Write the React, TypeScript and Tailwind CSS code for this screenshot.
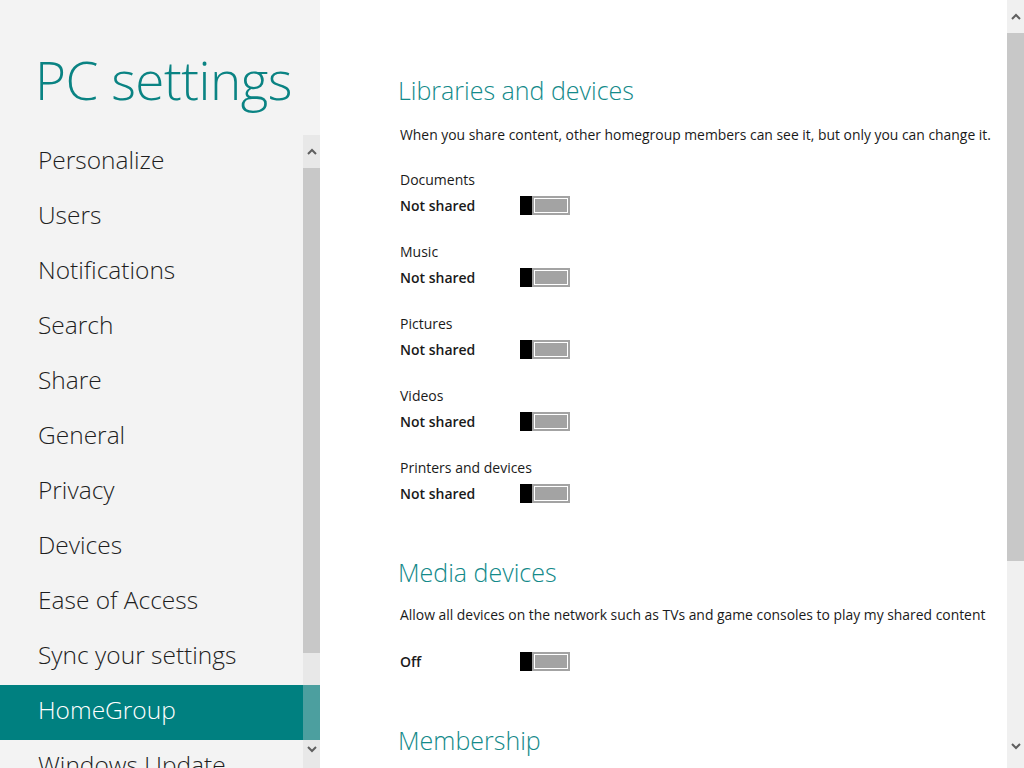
import React from 'react'

const menu = [
  'Personalize',
  'Users',
  'Notifications',
  'Search',
  'Share',
  'General',
  'Privacy',
  'Devices',
  'Ease of Access',
  'Sync your settings',
  'HomeGroup',
  'Windows Update',
]

const libraries = ['Documents', 'Music', 'Pictures', 'Videos', 'Printers and devices']

const font = { fontFamily: '"Open Sans", "Noto Sans", sans-serif' }

const Chevron = ({ up }: { up?: boolean }) => (
  <svg width="10" height="7" viewBox="0 0 10 7" className="block">
    <polyline
      points={up ? '1,6 5,2 9,6' : '1,1 5,5 9,1'}
      fill="none"
      stroke="#5f5f5f"
      strokeWidth="2"
    />
  </svg>
)

const Toggle = () => (
  <div className="flex h-[19px] w-[50px]">
    <div className="w-[12px] bg-black" />
    <div className="flex-1 bg-[#a3a3a3] p-[2px]">
      <div className="h-full w-full bg-white p-[1px]">
        <div className="h-full w-full bg-[#a3a3a3]" />
      </div>
    </div>
  </div>
)

const Heading = ({ children, className = '' }: { children: React.ReactNode; className?: string }) => (
  <h2 className={`h-[40px] text-[25px] leading-[40px] font-light text-[#138a8a] ${className}`}>
    {children}
  </h2>
)

export default function App() {
  return (
    <div className="flex h-[768px] w-[1024px] overflow-hidden bg-white" style={font}>
      {/* Sidebar */}
      <aside className="flex w-[320px] flex-col bg-[#f3f3f3]">
        <div className="h-[135px] pl-[35px] pt-[40px]">
          <h1 className="text-[53px] leading-[80px] font-light tracking-[-0.5px] text-[#0a8383]">
            PC settings
          </h1>
        </div>
        <div className="flex flex-1 overflow-hidden">
          <nav className="w-[303px]">
            {menu.map((item) => (
              <div
                key={item}
                className={`flex h-[55px] items-center pb-[5px] pl-[38px] text-[24.5px] font-light ${
                  item === 'HomeGroup' ? 'bg-[#008080] text-white' : 'text-[#1e1e1e]'
                }`}
              >
                {item}
              </div>
            ))}
          </nav>
          <div className="flex w-[17px] flex-col bg-[#e8e8e8]">
            <div className="flex h-[33px] items-center justify-center">
              <Chevron up />
            </div>
            <div className="h-[485px] bg-[#c8c8c8]" />
            <div className="h-[32px]" />
            <div className="h-[55px] bg-[#4c9f9f]" />
            <div className="flex h-[13px] items-end justify-center">
              <Chevron />
            </div>
          </div>
        </div>
      </aside>

      {/* Content */}
      <main className="flex-1 pl-[78px] pt-[70px] text-[#1a1a1a]">
        <Heading>Libraries and devices</Heading>
        <p className="mt-[15px] h-[20px] pl-[2px] text-[13.9px] leading-[20px]">
          When you share content, other homegroup members can see it, but only you can change it.
        </p>
        <div className="mt-[25px] pl-[2px]">
          {libraries.map((lib) => (
            <div key={lib} className="h-[72px]">
              <div className="h-[20px] text-[14px] leading-[20px]">{lib}</div>
              <div className="mt-[5px] flex h-[20px] items-center">
                <span className="w-[120px] text-[14px] font-semibold">Not shared</span>
                <Toggle />
              </div>
            </div>
          ))}
        </div>
        <Heading className="mt-[22px]">Media devices</Heading>
        <p className="mt-[13px] h-[20px] pl-[2px] text-[13.9px] leading-[20px]">
          Allow all devices on the network such as TVs and game consoles to play my shared content
        </p>
        <div className="mt-[26px] flex h-[20px] items-center pl-[2px]">
          <span className="w-[120px] text-[14px] font-semibold">Off</span>
          <Toggle />
        </div>
        <Heading className="mt-[49px]">Membership</Heading>
      </main>

      {/* Right scrollbar */}
      <div className="flex w-[17px] flex-col bg-[#f0f0f0]">
        <div className="flex h-[33px] items-center justify-center">
          <Chevron up />
        </div>
        <div className="h-[528px] bg-[#c8c8c8]" />
        <div className="flex-1" />
        <div className="flex h-[40px] items-start justify-center pt-[15px]">
          <Chevron />
        </div>
      </div>
    </div>
  )
}
